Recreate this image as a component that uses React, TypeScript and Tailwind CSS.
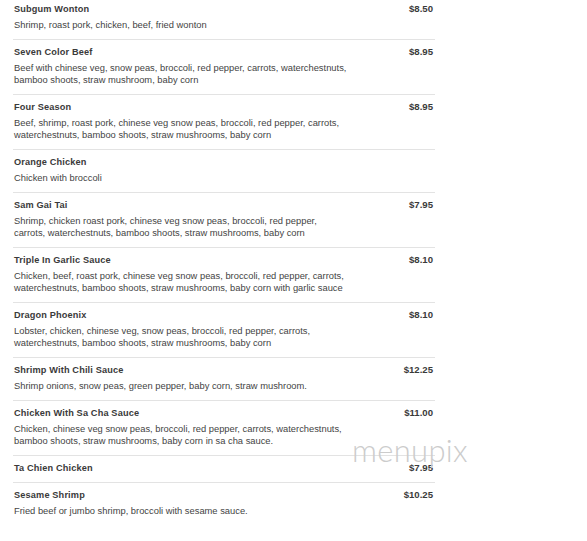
import React from "react";

type Item = { name: string; price?: string; desc: string[] };

const items: Item[] = [
  { name: "Subgum Wonton", price: "$8.50", desc: ["Shrimp, roast pork, chicken, beef, fried wonton"] },
  {
    name: "Seven Color Beef",
    price: "$8.95",
    desc: [
      "Beef with chinese veg, snow peas, broccoli, red pepper, carrots, waterchestnuts,",
      "bamboo shoots, straw mushroom, baby corn",
    ],
  },
  {
    name: "Four Season",
    price: "$8.95",
    desc: [
      "Beef, shrimp, roast pork, chinese veg snow peas, broccoli, red pepper, carrots,",
      "waterchestnuts, bamboo shoots, straw mushrooms, baby corn",
    ],
  },
  { name: "Orange Chicken", desc: ["Chicken with broccoli"] },
  {
    name: "Sam Gai Tai",
    price: "$7.95",
    desc: [
      "Shrimp, chicken roast pork, chinese veg snow peas, broccoli, red pepper,",
      "carrots, waterchestnuts, bamboo shoots, straw mushrooms, baby corn",
    ],
  },
  {
    name: "Triple In Garlic Sauce",
    price: "$8.10",
    desc: [
      "Chicken, beef, roast pork, chinese veg snow peas, broccoli, red pepper, carrots,",
      "waterchestnuts, bamboo shoots, straw mushrooms, baby corn with garlic sauce",
    ],
  },
  {
    name: "Dragon Phoenix",
    price: "$8.10",
    desc: [
      "Lobster, chicken, chinese veg, snow peas, broccoli, red pepper, carrots,",
      "waterchestnuts, bamboo shoots, straw mushrooms, baby corn",
    ],
  },
  {
    name: "Shrimp With Chili Sauce",
    price: "$12.25",
    desc: ["Shrimp onions, snow peas, green pepper, baby corn, straw mushroom."],
  },
  {
    name: "Chicken With Sa Cha Sauce",
    price: "$11.00",
    desc: [
      "Chicken, chinese veg snow peas, broccoli, red pepper, carrots, waterchestnuts,",
      "bamboo shoots, straw mushrooms, baby corn in sa cha sauce.",
    ],
  },
  { name: "Ta Chien Chicken", price: "$7.95", desc: [] },
  { name: "Sesame Shrimp", price: "$10.25", desc: ["Fried beef or jumbo shrimp, broccoli with sesame sauce."] },
];

export default function App() {
  return (
    <div
      className="relative w-[587px] h-[541px] overflow-hidden bg-white"
      style={{ fontFamily: '"Liberation Sans", Arial, sans-serif' }}
    >
      <div className="ml-[13px] w-[422px] -mt-[3px]">
        {items.map((it, i) => (
          <div
            key={it.name}
            className={
              "pt-[6px] pb-[8px] pl-[1px] pr-[2px] " +
              (i < items.length - 1 ? "border-b border-[#e3e3e3]" : "")
            }
          >
            <div className="flex justify-between items-center h-[12px] leading-[12px]">
              <span className="text-[9.2px] font-bold text-[#3a3a3a] tracking-[0.15px]">{it.name}</span>
              {it.price && (
                <span className="text-[9.6px] font-bold text-[#3a3a3a]">{it.price}</span>
              )}
            </div>
            {it.desc.length > 0 && (
              <div className="mt-[4px] text-[9.35px] leading-[12px] text-[#444444]">
                {it.desc.map((l) => (
                  <div key={l} className="whitespace-nowrap">
                    {l}
                  </div>
                ))}
              </div>
            )}
          </div>
        ))}
      </div>
      <div
        className="absolute left-[352px] top-[432px] text-[31px] leading-[36px] text-[#cccccc] font-light tracking-[0.3px]"
        style={{ fontFamily: "Lato, sans-serif" }}
      >
        menupix
      </div>
    </div>
  );
}
